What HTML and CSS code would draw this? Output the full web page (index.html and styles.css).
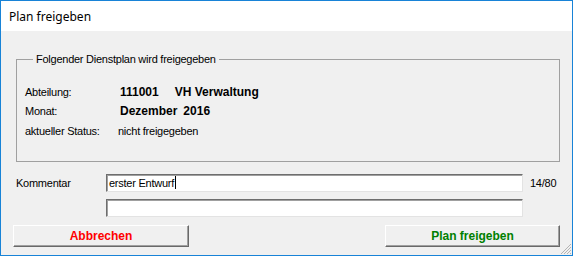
FILE: index.html
```html
<!DOCTYPE html>
<html lang="de">
<head>
<meta charset="utf-8">
<title>Plan freigeben</title>
<link rel="stylesheet" href="styles.css">
</head>
<body>
<div class="window">
  <div class="titlebar">Plan freigeben</div>
  <div class="client">
    <fieldset class="group">
      <legend class="legend">Folgender Dienstplan wird freigegeben</legend>
      <div class="info">
        <span class="lbl">Abteilung:</span>
        <span class="val"><span class="num">111001</span><span>VH Verwaltung</span></span>
        <span class="lbl">Monat:</span>
        <span class="val"><span class="month">Dezember</span><span>2016</span></span>
        <span class="lbl">aktueller Status:</span>
        <span class="status">nicht freigegeben</span>
      </div>
    </fieldset>
    <div class="comment-row">
      <span class="comment-label">Kommentar</span>
      <div class="textbox"><span>erster Entwurf</span><span class="caret"></span></div>
      <span class="counter">14/80</span>
    </div>
    <div class="comment-row second">
      <div class="textbox"></div>
    </div>
    <div class="buttons">
      <button class="btn cancel" type="button">Abbrechen</button>
      <button class="btn ok" type="button">Plan freigeben</button>
    </div>
    <svg class="grip" width="12" height="12" viewBox="0 0 12 12">
      <g stroke="#b4b4b4" stroke-width="1">
        <line x1="11" y1="1" x2="1" y2="11"/>
        <line x1="11" y1="4" x2="4" y2="11"/>
        <line x1="11" y1="7" x2="7" y2="11"/>
        <line x1="11" y1="10" x2="10" y2="11"/>
      </g>
    </svg>
  </div>
</div>
</body>
</html>
```

FILE: styles.css
```css
html, body {
  margin: 0;
  padding: 0;
}

body {
  width: 573px;
  height: 256px;
  overflow: hidden;
  font-family: "Liberation Sans", Arial, sans-serif;
  font-size: 11px;
  letter-spacing: -0.25px;
  color: #000;
}

.window {
  width: 573px;
  height: 256px;
  box-sizing: border-box;
  border: 1px solid #1883d7;
  display: flex;
  flex-direction: column;
  position: relative;
}

.titlebar {
  height: 30px;
  background: #fff;
  padding-left: 8px;
  display: flex;
  align-items: center;
  font-family: "Noto Sans", "Liberation Sans", sans-serif;
  font-size: 12px;
  letter-spacing: 0;
  color: #000;
}

.client {
  flex: 1;
  background: #f0f0f0;
  display: flex;
  flex-direction: column;
  padding: 0 12px;
  position: relative;
}

.group {
  margin: 22px 0 0 3px;
  padding: 16px 8px 20px 8px;
  border: 1px solid #a0a0a0;
  min-width: 0;
}

.legend {
  margin-left: 8px;
  padding: 0 3px 0 3px;
  line-height: 13px;
  font-size: 11px;
}

.info {
  display: grid;
  grid-template-columns: 95px 1fr;
  grid-auto-rows: 19.5px;
  align-items: center;
}

.val {
  font-weight: bold;
  font-size: 12px;
  letter-spacing: 0;
}

.num {
  margin-right: 16px;
}

.month {
  margin-right: 6px;
}

.status {
  margin-left: -2px;
}

.comment-row {
  display: flex;
  align-items: center;
  margin: 12px 0 0 3px;
  height: 18px;
}

.comment-row.second {
  margin-top: 7px;
  padding-left: 90px;
}

.comment-label {
  width: 90px;
}

.textbox {
  width: 417px;
  height: 18px;
  box-sizing: border-box;
  background: #fff;
  border-top: 1px solid #6e6e6e;
  border-left: 1px solid #6e6e6e;
  border-bottom: 1px solid #e3e3e3;
  border-right: 1px solid #e3e3e3;
  box-shadow: inset 1px 1px 0 #a0a0a0;
  padding-left: 2px;
  display: flex;
  align-items: center;
  font-size: 11px;
}

.caret {
  width: 1px;
  height: 13px;
  background: #000;
  margin-left: 1px;
}

.counter {
  margin-left: 7px;
}

.buttons {
  display: flex;
  justify-content: space-between;
  margin-top: 8px;
}

.btn {
  width: 176px;
  height: 22px;
  box-sizing: border-box;
  background: #f0f0f0;
  border-top: 1px solid #fff;
  border-left: 1px solid #fff;
  border-bottom: 1px solid #696969;
  border-right: 1px solid #696969;
  box-shadow: inset -1px -1px 0 #a0a0a0;
  font-family: "Liberation Sans", Arial, sans-serif;
  font-weight: bold;
  font-size: 12px;
  letter-spacing: 0;
  padding: 0;
}

.cancel {
  color: #ff0000;
}

.ok {
  color: #008000;
  width: 175px;
}

.grip {
  position: absolute;
  right: 0;
  bottom: 0;
}
```
